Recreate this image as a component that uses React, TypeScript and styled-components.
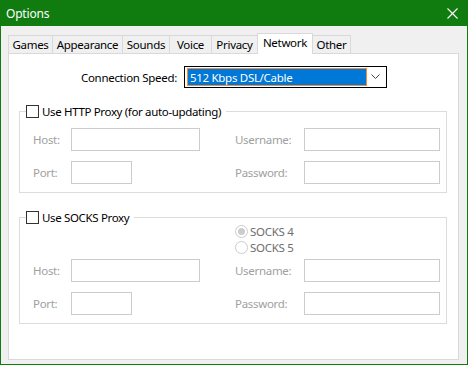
import React from "react";
import styled, { createGlobalStyle } from "styled-components";

const Global = createGlobalStyle`
  html, body { margin: 0; padding: 0; background: #ffffff; }
  body { font-family: "Noto Sans", "Open Sans", sans-serif; font-size: 11px; }
  * { box-sizing: border-box; }
`;

const Window = styled.div`
  width: 468px;
  height: 365px;
  display: flex;
  flex-direction: column;
  border: 1px solid #107c10;
  border-top: none;
  background: #f0f0f0;
`;

const TitleBar = styled.div`
  height: 26px;
  margin: 0 -1px;
  background: #107c10;
  color: #ffffff;
  display: flex;
  align-items: center;
  justify-content: space-between;
  padding: 0 10px 0 6px;
  font-size: 12px;
  letter-spacing: -0.2px;
`;

const Body = styled.div`
  flex: 1;
  display: flex;
  flex-direction: column;
  padding: 7px 8px 4px 7px;
`;

const TabStrip = styled.div`
  height: 21px;
  margin-bottom: -1px;
  display: flex;
  align-items: flex-end;
`;

const Tab = styled.div<{ $w: number; $active?: boolean }>`
  width: ${(p) => p.$w}px;
  height: ${(p) => (p.$active ? 21 : 18)}px;
  margin-bottom: ${(p) => (p.$active ? 0 : 1)}px;
  margin-left: -1px;
  &:first-child { margin-left: 0; }
  border: 1px solid #d9d9d9;
  border-bottom: none;
  background: ${(p) => (p.$active ? "#ffffff" : "#f0f0f0")};
  z-index: ${(p) => (p.$active ? 1 : 0)};
  display: flex;
  justify-content: center;
  align-items: ${(p) => (p.$active ? "flex-start" : "center")};
  padding-top: ${(p) => (p.$active ? 1 : 0)}px;
  font-size: 11.5px;
  letter-spacing: -0.3px;
  color: #000;
  white-space: nowrap;
`;

const Panel = styled.div`
  flex: 1;
  background: #ffffff;
  border: 1px solid #d9d9d9;
  padding: 12px 11px 0 10px;
  display: flex;
  flex-direction: column;
`;

const SpeedRow = styled.div`
  display: flex;
  align-items: center;
  height: 22px;
`;

const SpeedLabel = styled.div`
  width: 158px;
  text-align: right;
  font-size: 11.5px;
  letter-spacing: -0.3px;
  color: #000;
`;

const Combo = styled.div`
  margin-left: 7px;
  width: 203px;
  height: 22px;
  border: 1px solid #000;
  background: #fff;
  display: flex;
  align-items: center;
  padding: 0 6px 0 2px;
  gap: 4px;
`;

const ComboValue = styled.div`
  flex: 1;
  height: 18px;
  background: #0078d7;
  border: 1px solid #f08a3c;
  color: #fff;
  font-size: 11.5px;
  letter-spacing: -0.3px;
  display: flex;
  align-items: center;
  padding-left: 2px;
`;

const Group = styled.fieldset<{ $top: number }>`
  margin: ${(p) => p.$top}px 0 0 0;
  padding: 0 6px 8px 13px;
  border: 1px solid #dcdcdc;
  min-width: 0;
`;

const Legend = styled.legend`
  margin-left: -7px;
  padding: 0 5px 0 0;
  display: flex;
  align-items: center;
  height: 16px;
  font-size: 11.5px;
  letter-spacing: -0.35px;
  color: #000;
  gap: 3px;
`;

const CheckBox = styled.span`
  display: inline-block;
  width: 13px;
  height: 13px;
  border: 1px solid #333333;
  background: #fff;
`;

const FieldGrid = styled.div<{ $top: number }>`
  margin-top: ${(p) => p.$top}px;
  display: grid;
  grid-template-columns: 38px 129px 35px 69px 136px;
  row-gap: 10px;
  align-items: center;
`;

const FieldLabel = styled.div<{ $col: number }>`
  grid-column: ${(p) => p.$col};
  color: #a0a0a0;
  font-size: 11.5px;
  letter-spacing: -0.3px;
  white-space: nowrap;
`;

const Input = styled.div<{ $col: number; $w?: number }>`
  grid-column: ${(p) => p.$col};
  width: ${(p) => (p.$w ? `${p.$w}px` : "100%")};
  height: 23px;
  border: 1px solid #cccccc;
  background: #fff;
`;

const RadioGroup = styled.div`
  grid-column: 4 / span 2;
  display: flex;
  flex-direction: column;
  gap: 3px;
  margin-top: 0;
  margin-bottom: -5px;
`;

const RadioRow = styled.div`
  display: flex;
  align-items: center;
  height: 13px;
  gap: 2px;
  color: #6d6d6d;
  font-size: 11.5px;
  letter-spacing: -0.3px;
`;

const Radio = styled.span<{ $checked?: boolean }>`
  width: 13px;
  height: 13px;
  border-radius: 50%;
  border: 1px solid #cccccc;
  background: #fff;
  display: flex;
  align-items: center;
  justify-content: center;
  &::after {
    content: "";
    width: 7px;
    height: 7px;
    border-radius: 50%;
    background: ${(p) => (p.$checked ? "#cccccc" : "transparent")};
  }
`;

const tabs = [
  { label: "Games", w: 45 },
  { label: "Appearance", w: 71 },
  { label: "Sounds", w: 48 },
  { label: "Voice", w: 43 },
  { label: "Privacy", w: 47 },
  { label: "Network", w: 56, active: true },
  { label: "Other", w: 39 },
];

export default function App() {
  return (
    <>
      <Global />
      <Window>
        <TitleBar>
          <span>Options</span>
          <svg width="11" height="11" viewBox="0 0 11 11">
            <path d="M0.5 0.5 L10.5 10.5 M10.5 0.5 L0.5 10.5" stroke="#fff" strokeWidth="1.1" />
          </svg>
        </TitleBar>
        <Body>
          <TabStrip>
            {tabs.map((t) => (
              <Tab key={t.label} $w={t.w} $active={t.active}>
                {t.label}
              </Tab>
            ))}
          </TabStrip>
          <Panel>
            <SpeedRow>
              <SpeedLabel>Connection Speed:</SpeedLabel>
              <Combo>
                <ComboValue>512 Kbps DSL/Cable</ComboValue>
                <svg width="9" height="6" viewBox="0 0 9 6">
                  <path d="M0.5 0.5 L4.5 4.5 L8.5 0.5" stroke="#444" strokeWidth="1" fill="none" />
                </svg>
              </Combo>
            </SpeedRow>
            <Group $top={15}>
              <Legend>
                <CheckBox />
                Use HTTP Proxy (for auto-updating)
              </Legend>
              <FieldGrid $top={9}>
                <FieldLabel $col={1}>Host:</FieldLabel>
                <Input $col={2} />
                <FieldLabel $col={4}>Username:</FieldLabel>
                <Input $col={5} />
                <FieldLabel $col={1}>Port:</FieldLabel>
                <Input $col={2} $w={61} />
                <FieldLabel $col={4}>Password:</FieldLabel>
                <Input $col={5} />
              </FieldGrid>
            </Group>
            <Group $top={16}>
              <Legend>
                <CheckBox />
                Use SOCKS Proxy
              </Legend>
              <FieldGrid $top={0}>
                <RadioGroup>
                  <RadioRow>
                    <Radio $checked />
                    SOCKS 4
                  </RadioRow>
                  <RadioRow>
                    <Radio />
                    SOCKS 5
                  </RadioRow>
                </RadioGroup>
                <FieldLabel $col={1}>Host:</FieldLabel>
                <Input $col={2} />
                <FieldLabel $col={4}>Username:</FieldLabel>
                <Input $col={5} />
                <FieldLabel $col={1}>Port:</FieldLabel>
                <Input $col={2} $w={61} />
                <FieldLabel $col={4}>Password:</FieldLabel>
                <Input $col={5} />
              </FieldGrid>
            </Group>
          </Panel>
        </Body>
      </Window>
    </>
  );
}
